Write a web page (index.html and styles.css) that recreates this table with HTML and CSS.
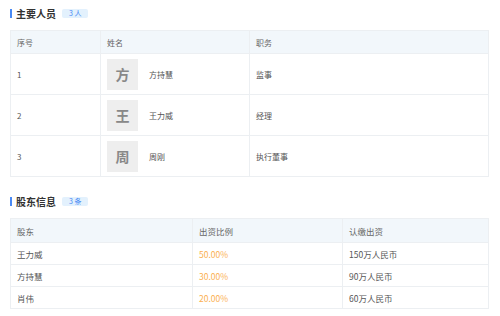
FILE: index.html
```html
<!DOCTYPE html>
<html lang="zh">
<head>
    <meta charset="UTF-8">
    <title>企业信息</title>
    <link rel="stylesheet" href="styles.css">
</head>
<body>
    <div class="section">
        <div class="title">
            <h3>主要人员</h3>
            <span class="badge">3 人</span>
        </div>
        <table class="staff">
            <tr>
                <th class="col-no">序号</th>
                <th class="col-name">姓名</th>
                <th>职务</th>
            </tr>
            <tr>
                <td>1</td>
                <td><div class="person"><span class="avatar">方</span>方持慧</div></td>
                <td>监事</td>
            </tr>
            <tr>
                <td>2</td>
                <td><div class="person"><span class="avatar">王</span>王力威</div></td>
                <td>经理</td>
            </tr>
            <tr>
                <td>3</td>
                <td><div class="person"><span class="avatar">周</span>周刚</div></td>
                <td>执行董事</td>
            </tr>
        </table>
    </div>

    <div class="section">
        <div class="title">
            <h3>股东信息</h3>
            <span class="badge">3 条</span>
        </div>
        <table class="holders">
            <tr>
                <th class="col-holder">股东</th>
                <th class="col-ratio">出资比例</th>
                <th>认缴出资</th>
            </tr>
            <tr>
                <td>王力威</td>
                <td class="ratio">50.00%</td>
                <td>150万人民币</td>
            </tr>
            <tr>
                <td>方持慧</td>
                <td class="ratio">30.00%</td>
                <td>90万人民币</td>
            </tr>
            <tr>
                <td>肖伟</td>
                <td class="ratio">20.00%</td>
                <td>60万人民币</td>
            </tr>
        </table>
    </div>
</body>
</html>
```

FILE: styles.css
```css
body{
    margin: 0;
    padding: 5px 11px 0 10px;
    font-family: "Noto Sans CJK SC", "Noto Sans", sans-serif;
    color: #555;
    background: white;
}
.section{
    margin-bottom: 16px;
}
.title{
    display: flex;
    align-items: center;
    height: 16px;
    margin-bottom: 9px;
}
.title h3{
    margin: 0;
    font-size: 10px;
    font-weight: bold;
    color: #333;
    border-left: 2px solid #4a8af4;
    padding-left: 4px;
    line-height: 9px;
}
.badge{
    margin-left: 6px;
    background-color: #e3f1fd;
    color: #4a8af4;
    font-size: 7px;
    height: 9px;
    line-height: 9px;
    padding: 0 7px;
    border-radius: 2px;
}
table{
    width: 100%;
    border-collapse: collapse;
    font-size: 8px;
}
th, td{
    border: 1px solid #eceff2;
    text-align: left;
    padding: 0 6px;
}
th{
    background-color: #f2f7fb;
    color: #666;
    font-weight: normal;
}
.staff th{
    height: 22px;
}
.staff td{
    height: 40px;
}
.staff .col-no{
    width: 77px;
}
.staff .col-name{
    width: 136px;
}
.person{
    display: flex;
    align-items: center;
    gap: 11px;
}
.avatar{
    width: 31px;
    height: 31px;
    background-color: #eeeeee;
    color: #888;
    font-size: 14px;
    font-weight: bold;
    display: flex;
    align-items: center;
    justify-content: center;
}
.holders{
    font-size: 8.5px;
}
.holders th{
    height: 23px;
}
.holders td{
    height: 21px;
}
.holders .col-holder{
    width: 169px;
}
.holders .col-ratio{
    width: 137px;
}
.ratio{
    color: #fbb050;
}
```
